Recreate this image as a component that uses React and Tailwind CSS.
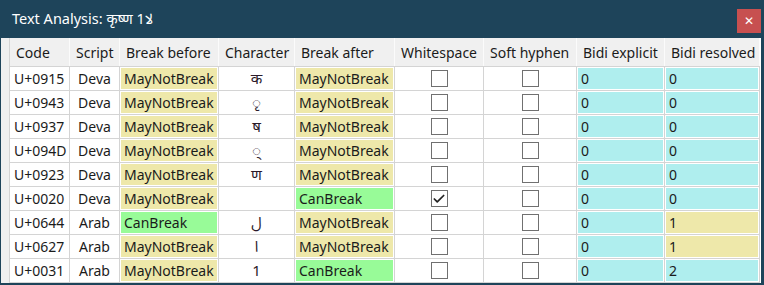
import { Check } from 'lucide-react';

// Text analysis dialog: per-character break / bidi table
const FONT = { fontFamily: '"Noto Sans", "Noto Sans Devanagari", "Noto Sans Arabic", "DejaVu Sans", sans-serif' };

const COLS = 'grid grid-cols-[60px_50px_99px_76px_100px_89px_93px_88px_95px]';

const HEADERS = ['Code', 'Script', 'Break before', 'Character', 'Break after', 'Whitespace', 'Soft hyphen', 'Bidi explicit', 'Bidi resolved'];

const ROWS = [
  ['U+0915', 'Deva', 'MayNotBreak', 'क', 'MayNotBreak', false, '0', '0'],
  ['U+0943', 'Deva', 'MayNotBreak', '\u0943', 'MayNotBreak', false, '0', '0'],
  ['U+0937', 'Deva', 'MayNotBreak', 'ष', 'MayNotBreak', false, '0', '0'],
  ['U+094D', 'Deva', 'MayNotBreak', '\u094D', 'MayNotBreak', false, '0', '0'],
  ['U+0923', 'Deva', 'MayNotBreak', 'ण', 'MayNotBreak', false, '0', '0'],
  ['U+0020', 'Deva', 'MayNotBreak', '', 'CanBreak', true, '0', '0'],
  ['U+0644', 'Arab', 'CanBreak', 'ل', 'MayNotBreak', false, '0', '1'],
  ['U+0627', 'Arab', 'MayNotBreak', 'ا', 'MayNotBreak', false, '0', '1'],
  ['U+0031', 'Arab', 'MayNotBreak', '1', 'CanBreak', false, '0', '2'],
];

function Cell({ children, className = '' }) {
  return (
    <div className={`h-[24px] border-r border-b border-[#d4d4d4] flex items-center ${className}`}>
      {children}
    </div>
  );
}

function Tinted({ color, children }) {
  return (
    <Cell className="p-px">
      <div className={`h-full w-full flex items-center pl-[3px] ${color}`}>{children}</div>
    </Cell>
  );
}

function breakColor(v) {
  return v === 'CanBreak' ? 'bg-[#98fb98]' : 'bg-[#eee8aa]';
}

function bidiColor(v) {
  return Number(v) % 2 === 1 ? 'bg-[#eee8aa]' : 'bg-[#afeeee]';
}

function CheckBox({ checked }) {
  return (
    <div className="w-[17px] h-[17px] border border-[#707070] bg-white flex items-center justify-center">
      {checked && <Check size={14} strokeWidth={3} className="text-[#222]" />}
    </div>
  );
}

export default function App() {
  return (
    <div className="w-[764px] h-[285px] bg-[#1e445a] flex flex-col text-[#1b1b1b] overflow-hidden" style={FONT}>
      {/* Title bar */}
      <div className="h-[38px] flex items-start justify-between shrink-0">
        <div className="pl-[12px] pt-[8px] text-white text-[14.5px]">Text Analysis: कृष्ण لا1</div>
        <div className="mt-[9px] mr-[3px] w-[24px] h-[24px] bg-[#c75050] text-white flex items-center justify-center text-[12px] font-bold">✕</div>
      </div>

      {/* Body */}
      <div className="flex-1 flex bg-white ml-px mr-[3px] mb-[2px] text-[14px]">
        <div className="w-[9px] bg-[#f0f0f0] border-r border-[#d4d4d4]" />
        <div className="flex flex-col">
          <div className={`${COLS} h-[29px] bg-[#f0f0f0] border-b border-[#d4d4d4]`}>
            {HEADERS.map((h) => (
              <div key={h} className="flex items-center pl-[6px] border-r border-[#fbfbfb] whitespace-nowrap">{h}</div>
            ))}
          </div>
          {ROWS.map((r) => (
            <div key={r[0]} className={COLS}>
              <Cell className="pl-[4px]">{r[0]}</Cell>
              <Cell className="justify-center">{r[1]}</Cell>
              <Tinted color={breakColor(r[2])}>{r[2]}</Tinted>
              <Cell className="justify-center text-[15px] text-[#2a1a2a]">{r[3]}</Cell>
              <Tinted color={breakColor(r[4])}>{r[4]}</Tinted>
              <Cell className="justify-center"><CheckBox checked={r[5]} /></Cell>
              <Cell className="justify-center"><CheckBox checked={false} /></Cell>
              <Tinted color={bidiColor(r[6])}>{r[6]}</Tinted>
              <Tinted color={bidiColor(r[7])}>{r[7]}</Tinted>
            </div>
          ))}
        </div>
      </div>
    </div>
  );
}
